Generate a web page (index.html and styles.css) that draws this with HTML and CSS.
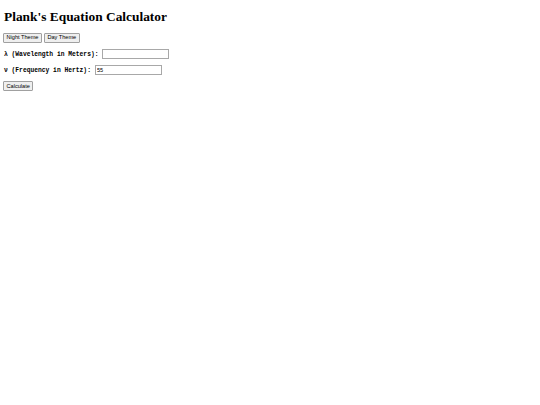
FILE: index.html
```html
<!DOCTYPE html>
<html>
<head>
<meta charset="utf-8">
<title>Plank's Equation Calculator</title>
<link rel="stylesheet" href="styles.css">
</head>
<body>
<h1 class="title">Plank's Equation Calculator</h1>
<div class="form">
<div class="themes">
<button class="btn">Night Theme</button>
<button class="btn">Day Theme</button>
</div>
<div class="row"><label class="lbl" for="wl">λ (Wavelength in Meters):</label><input class="field" id="wl" type="text"></div>
<div class="row"><label class="lbl" for="fq">ν (Frequency in Hertz):</label><input class="field" id="fq" type="text" value="55"></div>
<div class="row"><button class="btn">Calculate</button></div>
</div>
</body>
</html>
```
FILE: styles.css
```css
body { margin: 3px; font-family: "Liberation Serif", serif; color: #000; background: #fff; }
.title { font-family: "Liberation Serif", serif; font-size: 13.4px; line-height: 16px; font-weight: bold; margin: 5.5px 0 8.5px 1px; }
.form { display: flex; flex-direction: column; gap: 7px; align-items: flex-start; }
.themes { display: flex; gap: 2px; }
.row { display: flex; align-items: center; gap: 4px; height: 9px; }
.btn { box-sizing: border-box; height: 9.5px; padding: 0 2.5px; margin: 0; font-family: "Liberation Sans", sans-serif; font-size: 5.6px; line-height: 7px; color: #000; background: #efefef; border: 1px solid #a0a0a0; border-radius: 1px; }
.lbl { margin-left: 1px; font-family: "Liberation Mono", monospace; font-size: 6.3px; font-weight: bold; white-space: pre; }
.field { box-sizing: border-box; width: 67px; height: 9.5px; padding: 0 1px; margin: 0; font-family: "Liberation Sans", sans-serif; font-size: 5.6px; color: #000; background: #fff; border: 1px solid #a8a8a8; border-radius: 0; }
```
